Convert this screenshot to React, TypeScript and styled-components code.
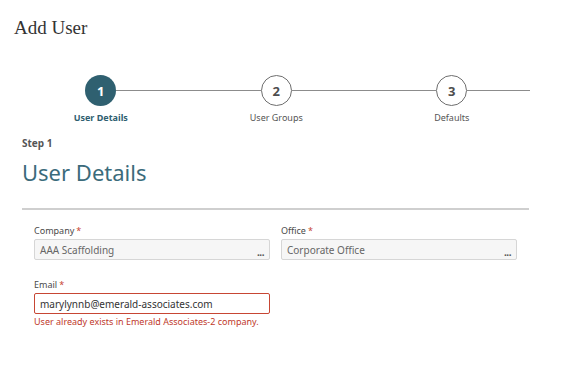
import React from "react";
import styled, { createGlobalStyle } from "styled-components";

const Global = createGlobalStyle`
  html, body { margin: 0; padding: 0; background: #fff; }
  body { font-family: "Noto Sans", "Open Sans", sans-serif; color: #333; }
  * { box-sizing: border-box; }
`;

const Page = styled.div`
  width: 583px;
  height: 388px;
  display: flex;
  flex-direction: column;
`;

const Title = styled.h1`
  margin: 17px 0 0 14px;
  font-family: "Liberation Serif", "DejaVu Serif", serif;
  font-weight: 400;
  font-size: 19px;
  line-height: 22px;
  color: #333;
`;

const Stepper = styled.div`
  margin: 36px 0 0 13px;
  display: grid;
  grid-template-columns: repeat(3, 175.5px);
`;

const Step = styled.div`
  display: flex;
  flex-direction: column;
  align-items: stretch;
`;

const StepTrack = styled.div`
  display: grid;
  grid-template-columns: 1fr 31px 1fr;
  align-items: center;
  height: 31px;
`;

const Line = styled.div<{ $hidden?: boolean; $trim?: number }>`
  height: 1px;
  background: ${(p) => (p.$hidden ? "transparent" : "#8c8c8c")};
  margin-right: ${(p) => p.$trim ?? 0}px;
`;

const Circle = styled.div<{ $active?: boolean }>`
  width: 31px;
  height: 31px;
  border-radius: 50%;
  display: flex;
  align-items: center;
  justify-content: center;
  font-weight: 700;
  font-size: 13px;
  background: ${(p) => (p.$active ? "#2f6070" : "#fff")};
  color: ${(p) => (p.$active ? "#fff" : "#4d4d4d")};
  border: ${(p) => (p.$active ? "none" : "1.5px solid #6e6e6e")};
`;

const StepLabel = styled.div<{ $active?: boolean }>`
  margin-top: 6px;
  text-align: center;
  font-size: 9px;
  line-height: 12px;
  font-weight: ${(p) => (p.$active ? 700 : 400)};
  color: ${(p) => (p.$active ? "#2f6070" : "#555")};
`;

const Section = styled.div`
  padding-left: 22px;
  width: 529px;
  display: flex;
  flex-direction: column;
`;

const StepTag = styled.div`
  margin-top: 13px;
  font-size: 10px;
  line-height: 12px;
  font-weight: 700;
  color: #555;
`;

const Heading = styled.h2`
  margin: 9px 0 0 0;
  font-size: 22px;
  line-height: 28px;
  font-weight: 400;
  color: #3b6b7b;
`;

const Divider = styled.hr`
  margin: 22px 0 0 0;
  border: none;
  height: 2px;
  background: #cfcfcf;
  width: 507px;
`;

const Form = styled.div`
  padding-left: 34px;
  margin-top: 15px;
  display: grid;
  grid-template-columns: 236px 236px;
  column-gap: 11px;
  row-gap: 19px;
`;

const Field = styled.div`
  display: flex;
  flex-direction: column;
`;

const Label = styled.label`
  font-size: 9px;
  line-height: 12px;
  color: #4a4a4a;
  margin-bottom: 2px;
`;

const Req = styled.span`
  color: #c74634;
  margin-left: 2px;
`;

const Input = styled.div<{ $readonly?: boolean; $error?: boolean }>`
  height: 21px;
  display: flex;
  align-items: center;
  justify-content: space-between;
  padding: 0 5px;
  font-size: 10px;
  border: 1px solid ${(p) => (p.$error ? "#c74634" : "#d6d6d6")};
  border-radius: 2px;
  background: ${(p) => (p.$readonly ? "#f6f6f6" : "#fff")};
  color: ${(p) => (p.$readonly ? "#666" : "#333")};
`;

const Dots = styled.span`
  font-size: 10px;
  letter-spacing: -0.5px;
  color: #555;
  font-weight: 700;
  align-self: flex-end;
  line-height: 14px;
`;

const ErrorText = styled.div`
  margin-top: 2px;
  font-size: 9px;
  line-height: 12px;
  color: #c0392b;
`;

const steps = [
  { n: 1, label: "User Details", active: true },
  { n: 2, label: "User Groups", active: false },
  { n: 3, label: "Defaults", active: false },
];

export default function App() {
  return (
    <>
      <Global />
      <Page>
        <Title>Add User</Title>
        <Stepper>
          {steps.map((s, i) => (
            <Step key={s.n}>
              <StepTrack>
                <Line $hidden={i === 0} />
                <Circle $active={s.active}>{s.n}</Circle>
                <Line $trim={i === steps.length - 1 ? 10 : 0} />
              </StepTrack>
              <StepLabel $active={s.active}>{s.label}</StepLabel>
            </Step>
          ))}
        </Stepper>
        <Section>
          <StepTag>Step 1</StepTag>
          <Heading>User Details</Heading>
          <Divider />
        </Section>
        <Form>
          <Field>
            <Label>
              Company<Req>*</Req>
            </Label>
            <Input $readonly>
              <span>AAA Scaffolding</span>
              <Dots>...</Dots>
            </Input>
          </Field>
          <Field>
            <Label>
              Office<Req>*</Req>
            </Label>
            <Input $readonly>
              <span>Corporate Office</span>
              <Dots>...</Dots>
            </Input>
          </Field>
          <Field>
            <Label>
              Email<Req>*</Req>
            </Label>
            <Input $error>
              <span>marylynnb@emerald-associates.com</span>
            </Input>
            <ErrorText>User already exists in Emerald Associates-2 company.</ErrorText>
          </Field>
        </Form>
      </Page>
    </>
  );
}
